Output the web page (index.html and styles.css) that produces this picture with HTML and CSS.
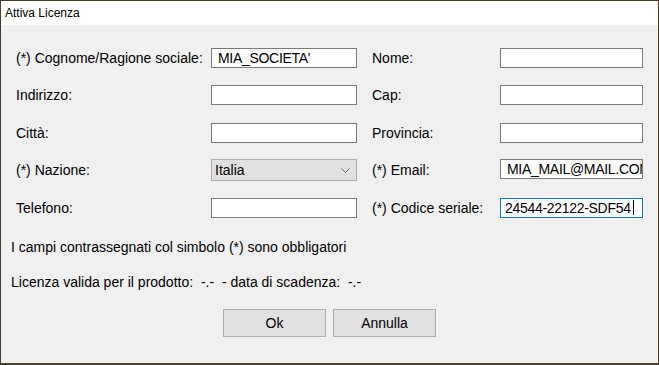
FILE: index.html
```html
<!DOCTYPE html>
<html lang="it">
<head>
<meta charset="utf-8">
<title>Attiva Licenza</title>
<link rel="stylesheet" href="styles.css">
</head>
<body>
<div class="window">
  <div class="titlebar">Attiva Licenza</div>
  <div class="content">
    <div class="form">
      <div class="label">(*) Cognome/Ragione sociale:</div>
      <div class="field"><span class="val">MIA_SOCIETA'</span></div>
      <div class="label label-r">Nome:</div>
      <div class="field field-r"></div>

      <div class="label">Indirizzo:</div>
      <div class="field"></div>
      <div class="label label-r">Cap:</div>
      <div class="field field-r"></div>

      <div class="label">Città:</div>
      <div class="field"></div>
      <div class="label label-r">Provincia:</div>
      <div class="field field-r"></div>

      <div class="label">(*) Nazione:</div>
      <div class="select"><span class="val">Italia</span>
        <svg class="chev" width="9" height="5" viewBox="0 0 9 5"><path d="M0.5 0.5 L4.5 4.5 L8.5 0.5" fill="none" stroke="#606060" stroke-width="1"/></svg>
      </div>
      <div class="label label-r">(*) Email:</div>
      <div class="field field-r email"><span class="val">MIA_MAIL@MAIL.COM</span></div>

      <div class="label">Telefono:</div>
      <div class="field"></div>
      <div class="label label-r">(*) Codice seriale:</div>
      <div class="field field-r focused"><span class="val">24544-22122-SDF54</span><span class="caret"></span></div>
    </div>
    <p class="note">I campi contrassegnati col simbolo (*) sono obbligatori</p>
    <p class="note note-lic">Licenza valida per il prodotto:&nbsp; -.-&nbsp; - data di scadenza:&nbsp; -.-</p>
    <div class="buttons">
      <div class="btn">Ok</div>
      <div class="btn">Annulla</div>
    </div>
  </div>
</div>
</body>
</html>
```

FILE: styles.css
```css
html, body {
  margin: 0;
  padding: 0;
}
body {
  background: #4a3a2c;
  width: 659px;
  height: 365px;
  overflow: hidden;
  font-family: "Liberation Sans", sans-serif;
  font-size: 14px;
  color: #000;
}
.window {
  margin: 1px 0 0 1px;
  width: 657px;
  height: 362px;
  background: #f0f0f0;
  display: flex;
  flex-direction: column;
}
.titlebar {
  height: 24px;
  background: #fff;
  font-family: "Liberation Sans", sans-serif;
  font-size: 12px;
  line-height: 24px;
  padding-left: 4px;
}
.content {
  flex: 1;
  padding: 14px 0 0 0;
}
.form {
  display: grid;
  grid-template-columns: 195px 146px 143px 143px;
  grid-auto-rows: 37.5px;
  align-items: center;
  padding-left: 15px;
}
.label {
  white-space: nowrap;
  line-height: 16px;
}
.label-r {
  padding-left: 15px;
}
.field {
  box-sizing: border-box;
  height: 20px;
  width: 146px;
  background: #fff;
  border: 1px solid #7a7a7a;
  padding-left: 6px;
  line-height: 18px;
  white-space: nowrap;
  overflow: hidden;
  display: flex;
  align-items: center;
}
.field .val {
  letter-spacing: -0.3px;
}
.field-r {
  width: 143px;
}
.email {
  margin-top: -2px;
}
.focused {
  border-color: #0078d7;
  padding-left: 4px;
}
.caret {
  display: inline-block;
  flex: none;
  width: 1px;
  height: 15px;
  background: #000;
  margin-left: 2px;
}
.val {
  flex: none;
}
.select {
  box-sizing: border-box;
  height: 22px;
  width: 146px;
  background: #e1e1e1;
  border: 1px solid #adadad;
  padding: 0 6px 0 3px;
  display: flex;
  align-items: center;
  justify-content: space-between;
}
.note {
  margin: 12px 0 0 0;
  padding-left: 10px;
  line-height: 16px;
  white-space: nowrap;
}
.note-lic {
  margin-top: 19px;
}
.buttons {
  display: flex;
  justify-content: center;
  gap: 7px;
  margin-top: 19px;
}
.btn {
  box-sizing: border-box;
  width: 103px;
  height: 28px;
  background: #e1e1e1;
  border: 1px solid #adadad;
  display: flex;
  align-items: center;
  justify-content: center;
}
```
